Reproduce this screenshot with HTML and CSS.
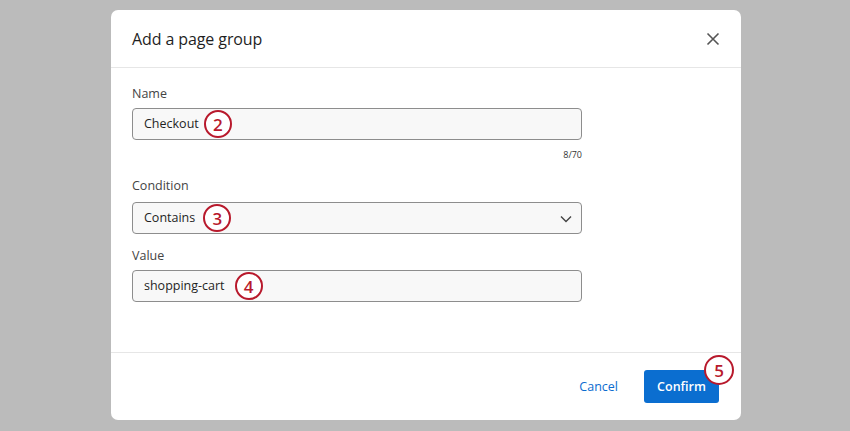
FILE: index.html
```html
<!DOCTYPE html>
<html>
<head>
<meta charset="utf-8">
<link rel="stylesheet" href="styles.css">
</head>
<body>
<div class="overlay">
  <div class="dialog">
    <div class="header">
      <h1 class="title">Add a page group</h1>
      <button class="close" aria-label="Close">
        <svg width="14" height="14" viewBox="0 0 14 14"><path d="M1.5 1.5 L12.5 12.5 M12.5 1.5 L1.5 12.5" stroke="#555" stroke-width="1.6" fill="none"/></svg>
      </button>
    </div>
    <div class="body">
      <div class="field">
        <label class="label">Name</label>
        <div class="input"><span class="val">Checkout</span><span class="badge">2</span></div>
        <div class="counter">8/70</div>
      </div>
      <div class="field cond">
        <label class="label">Condition</label>
        <div class="input select"><span class="val">Contains</span><span class="badge b3">3</span>
          <svg class="chev" width="12" height="8" viewBox="0 0 12 8"><path d="M1 1.5 L6 6.5 L11 1.5" stroke="#444" stroke-width="1.4" fill="none"/></svg>
        </div>
      </div>
      <div class="field value">
        <label class="label">Value</label>
        <div class="input"><span class="val">shopping-cart</span><span class="badge b4">4</span></div>
      </div>
    </div>
    <div class="footer">
      <button class="cancel">Cancel</button>
      <button class="confirm">Confirm<span class="badge b5">5</span></button>
    </div>
  </div>
</div>
</body>
</html>
```
FILE: styles.css
```css
* { box-sizing: border-box; }
html, body { margin: 0; padding: 0; }
body {
  width: 850px;
  height: 431px;
  background: #bbbbbb;
  font-family: "Open Sans", "Noto Sans", sans-serif;
  color: #1f1f1f;
  overflow: hidden;
}
.overlay {
  padding-top: 10px;
  padding-left: 111px;
}
.dialog {
  width: 630px;
  height: 410px;
  background: #fff;
  border-radius: 7px;
  display: flex;
  flex-direction: column;
}
.header {
  height: 58px;
  border-bottom: 1px solid #e6e6e6;
  display: flex;
  align-items: center;
  justify-content: space-between;
  padding: 0 21px 0 21px;
}
.title {
  margin: 0;
  font-size: 16px;
  font-weight: 400;
  color: #1f1f1f;
  letter-spacing: -0.1px;
  padding-top: 1px;
}
.close {
  border: 0;
  background: none;
  padding: 0;
  width: 14px;
  height: 14px;
  display: flex;
}
.body {
  flex: 1;
  padding: 18px 159px 0 21px;
}
.field { position: relative; }
.label {
  display: block;
  font-size: 12.5px;
  color: #444;
  line-height: 16px;
  margin-bottom: 6px;
}
.input {
  position: relative;
  height: 32px;
  border: 1px solid #8d8d8d;
  border-radius: 4px;
  background: #f8f8f8;
  display: flex;
  align-items: center;
  padding-left: 11px;
  font-size: 12.5px;
  color: #1f1f1f;
}
.val { line-height: 16px; }
.select { justify-content: flex-start; }
.chev { position: absolute; right: 9px; top: 12px; }
.counter {
  text-align: right;
  font-size: 9px;
  color: #333;
  margin-top: 9px;
  line-height: 12px;
}
.cond { margin-top: 17px; }
.cond .label { margin-bottom: 8px; }
.value { margin-top: 14px; }
.badge {
  display: inline-flex;
  align-items: center;
  justify-content: center;
  width: 28px;
  height: 28px;
  border: 2.6px solid #b8192c;
  border-radius: 50%;
  background: #fff;
  color: #b8192c;
  font-size: 17px;
  font-weight: 600;
  margin-left: 5px;
  line-height: 1;
}
.b3 { margin-left: 8px; }
.b4 { margin-left: 10px; }
.footer {
  height: 68px;
  border-top: 1px solid #e6e6e6;
  display: flex;
  align-items: center;
  justify-content: flex-end;
  padding: 0 22px 0 0;
  gap: 0;
}
.cancel {
  border: 0;
  background: none;
  font-family: inherit;
  font-size: 12.5px;
  color: #0b6ccf;
  padding: 0;
  margin-right: 26px;
}
.confirm {
  position: relative;
  border: 0;
  border-radius: 3px;
  background: #0b6ed0;
  color: #fff;
  font-family: inherit;
  font-size: 12.5px;
  font-weight: 600;
  width: 75px;
  height: 33px;
  padding: 0;
}
.b5 {
  position: absolute;
  right: -15px;
  top: -15px;
  margin: 0;
  width: 30px;
  height: 30px;
}
```
